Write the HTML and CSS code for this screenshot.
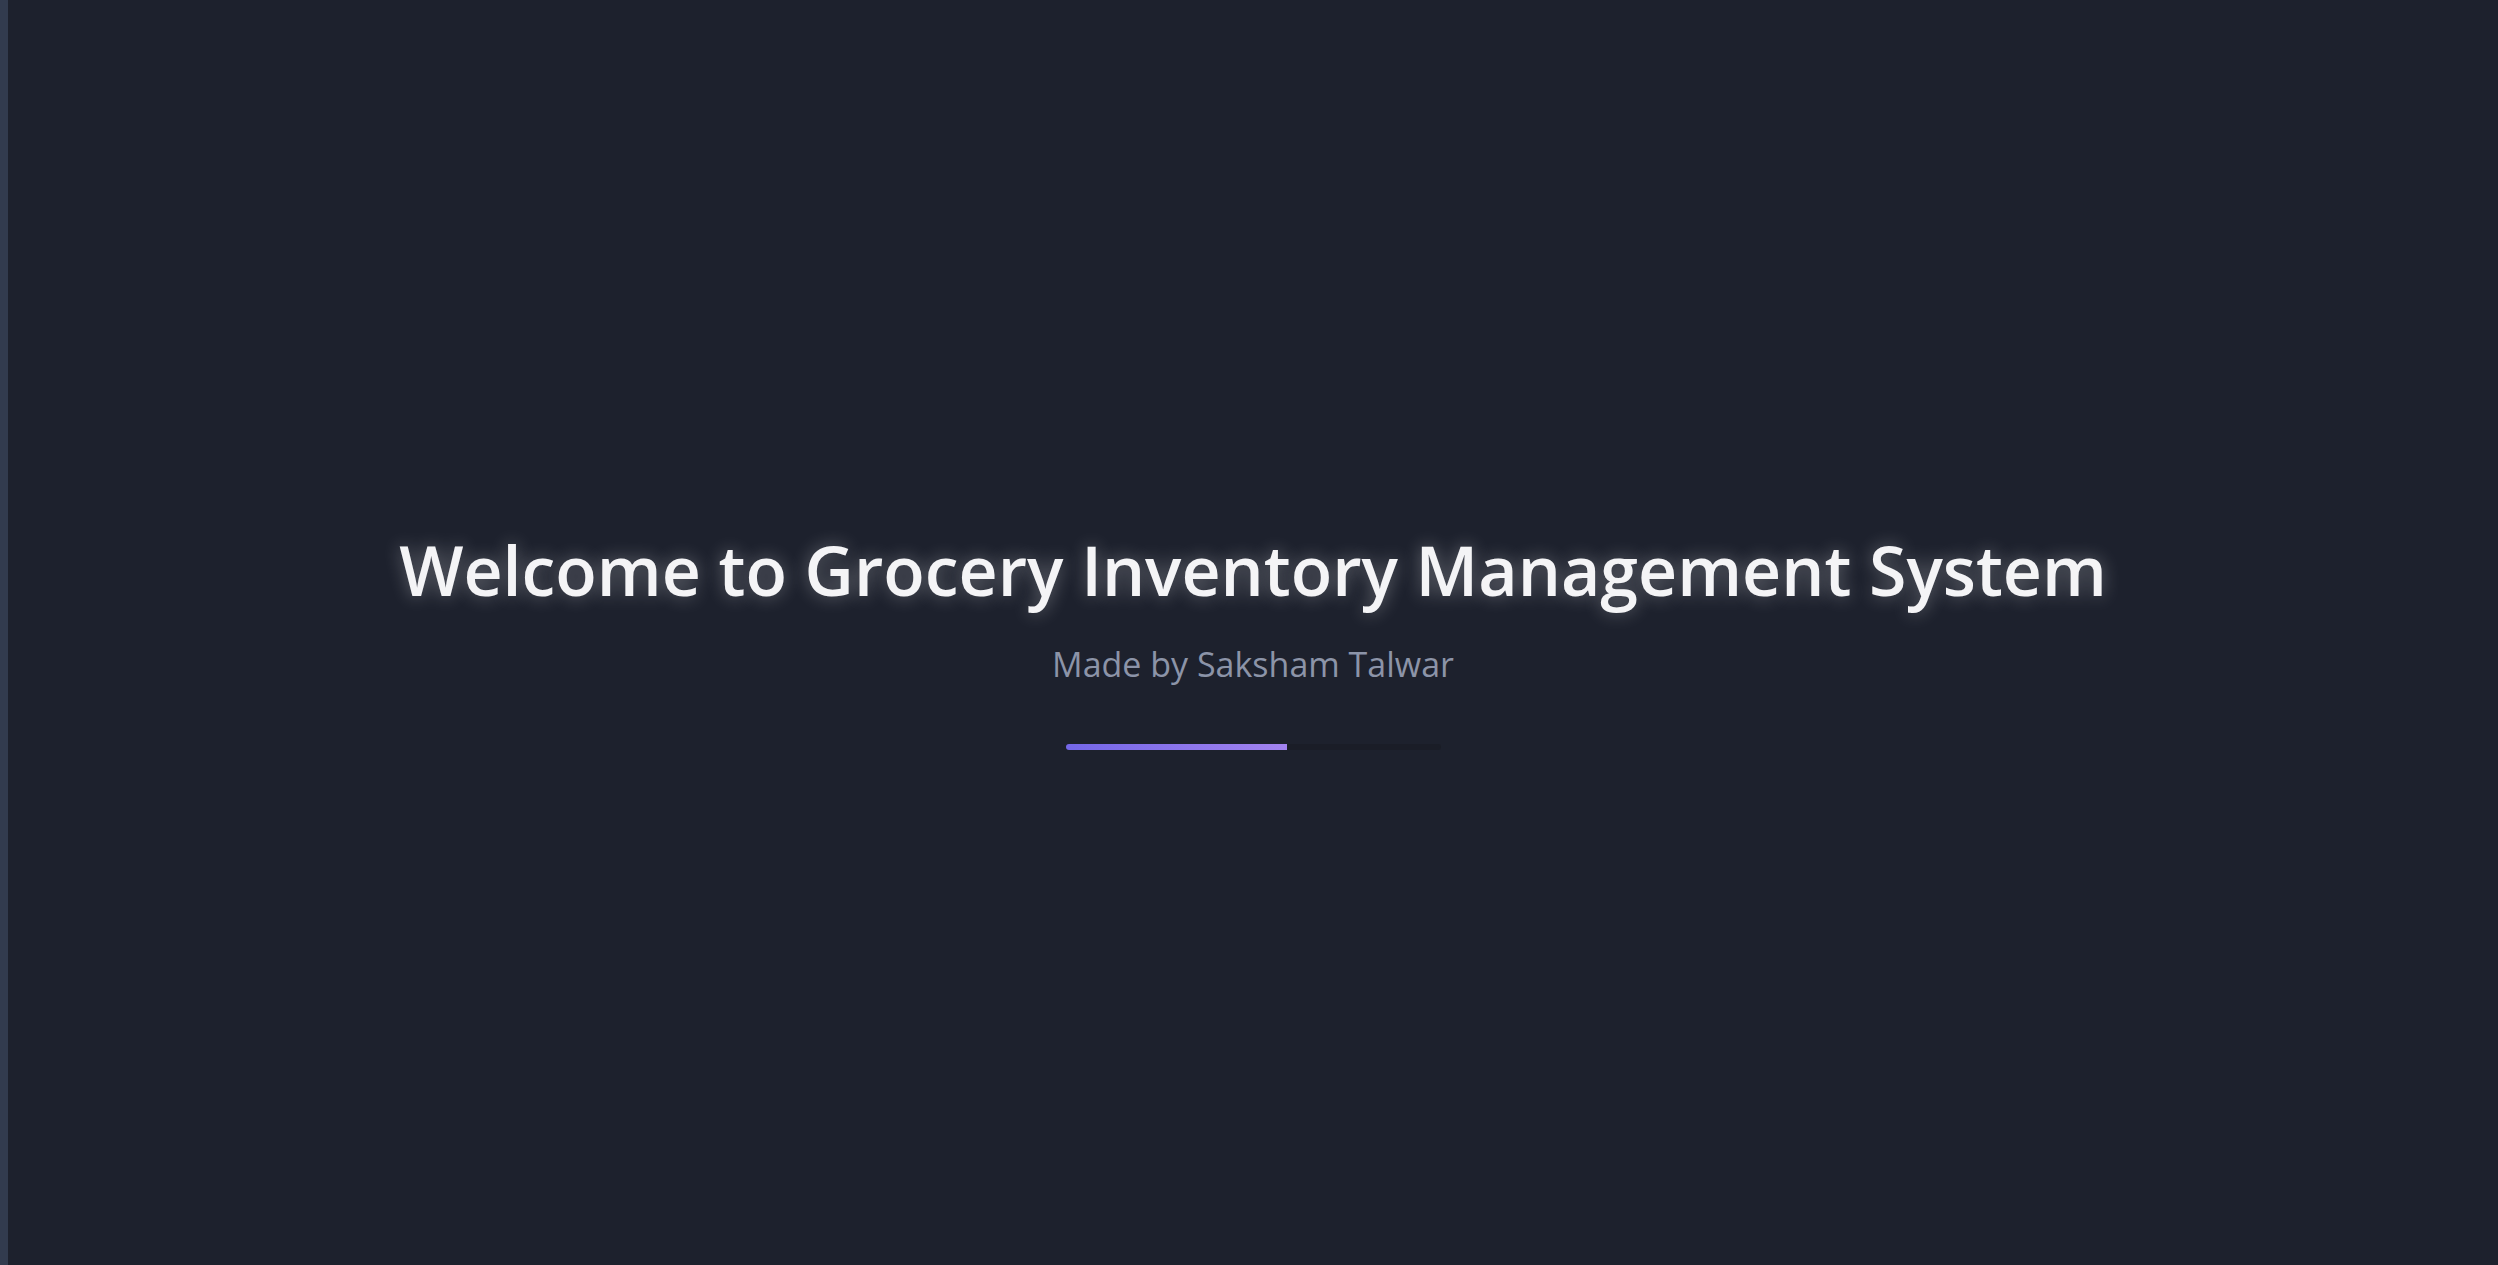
FILE: index.html
```html
<!DOCTYPE html>
<html lang="en">
<head>
<meta charset="utf-8">
<title>Grocery Inventory Management System</title>
<link rel="stylesheet" href="styles.css">
</head>
<body>
<div class="app">
  <div class="edge"></div>
  <main class="splash">
    <h1 class="title">Welcome to Grocery Inventory Management System</h1>
    <p class="subtitle">Made by Saksham Talwar</p>
    <div class="track"><div class="fill" style="width:59%"></div></div>
  </main>
</div>
</body>
</html>
```
FILE: styles.css
```css
html, body {
  margin: 0;
  padding: 0;
  height: 100%;
  background: #1d212d;
}
.app {
  display: flex;
  height: 100%;
}
.edge {
  width: 8px;
  flex: none;
  background: #323b4e;
}
.splash {
  flex: 1;
  display: flex;
  flex-direction: column;
  align-items: center;
  justify-content: center;
  padding-top: 14px;
  font-family: "Open Sans", "Noto Sans", sans-serif;
}
.title {
  margin: 0;
  font-size: 68px;
  font-weight: 600;
  color: #f4f4f6;
  text-shadow: 0 0 18px rgba(255, 255, 255, 0.35);
  letter-spacing: 0;
  line-height: 1.2;
}
.subtitle {
  margin: 32px 0 0;
  font-size: 34px;
  font-weight: 400;
  color: #8c94a8;
  line-height: 1.3;
}
.track {
  margin-top: 58px;
  width: 375px;
  height: 6px;
  border-radius: 3px;
  background: #1a1d27;
  overflow: hidden;
}
.fill {
  height: 100%;
  background: linear-gradient(90deg, #7467e8, #a283ef);
}
```
